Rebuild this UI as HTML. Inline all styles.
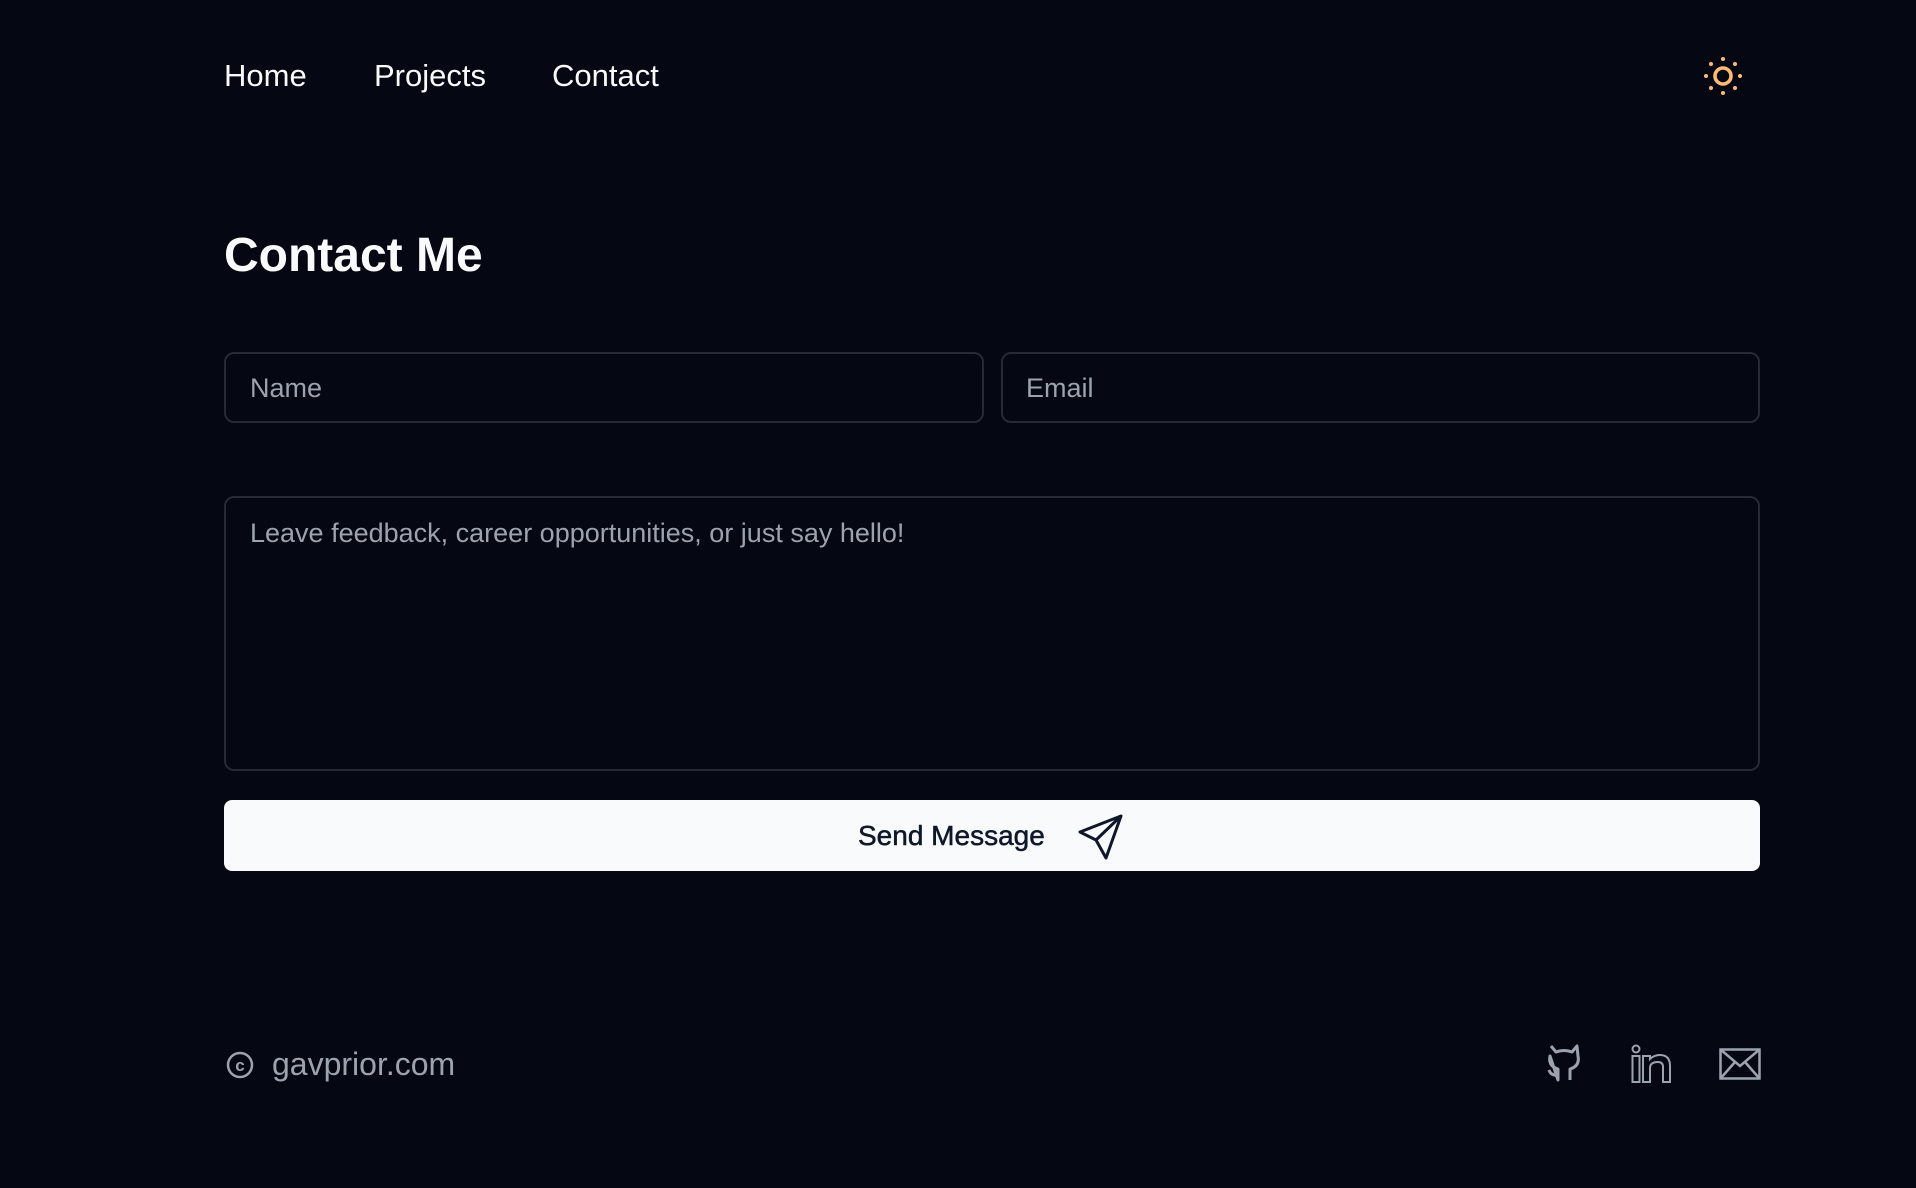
<!DOCTYPE html>
<html><head><meta charset="utf-8"><style>
*{margin:0;padding:0;box-sizing:border-box}
html,body{width:1916px;height:1188px;background:#050712;overflow:hidden;font-family:"Liberation Sans",sans-serif}
.a{position:absolute;white-space:nowrap}
.nav{color:#f8fafc;font-size:31px;top:58px}
.box{position:absolute;border:2px solid #252a36;border-radius:10px;background:#050712}
.ph{position:absolute;color:#9ca3af;font-size:27px}
</style></head><body>
<div class="a nav" style="left:224px">Home</div>
<div class="a nav" style="left:374px">Projects</div>
<div class="a nav" style="left:552px">Contact</div>
<svg class="a" style="left:1700px;top:53px" width="46" height="46" viewBox="0 0 46 46">
<circle cx="23" cy="23" r="8" fill="none" stroke="#fdba74" stroke-width="3.6"/>
<g fill="#fdba74"><circle cx="23" cy="6" r="2"/><circle cx="23" cy="40" r="2"/><circle cx="6" cy="23" r="2"/><circle cx="40" cy="23" r="2"/><circle cx="11" cy="11" r="2"/><circle cx="35" cy="11" r="2"/><circle cx="11" cy="35" r="2"/><circle cx="35" cy="35" r="2"/></g></svg>
<div class="a" style="left:224px;top:228px;font-size:48px;font-weight:bold;color:#f8fafc">Contact Me</div>
<div class="box" style="left:224px;top:352px;width:760px;height:71px"></div>
<div class="ph" style="left:250px;top:373px">Name</div>
<div class="box" style="left:1001px;top:352px;width:759px;height:71px"></div>
<div class="ph" style="left:1026px;top:373px">Email</div>
<div class="box" style="left:224px;top:496px;width:1536px;height:275px"></div>
<div class="ph" style="left:250px;top:518px">Leave feedback, career opportunities, or just say hello!</div>
<div class="a" style="left:224px;top:800px;width:1536px;height:71px;background:#f8fafc;border-radius:8px"></div>
<div class="a" style="left:858px;top:820px;font-size:28px;color:#0f172a;-webkit-text-stroke:0.5px #0f172a">Send Message</div>
<svg class="a" style="left:1076px;top:812px" width="50" height="50" viewBox="0 0 50 50"><path d="M45 4 L4 20 L20 28 L30 46 Z M45 4 L20 28" fill="none" stroke="#0f172a" stroke-width="3" stroke-linejoin="round"/></svg>
<svg class="a" style="left:225px;top:1050px" width="30" height="30" viewBox="0 0 30 30"><circle cx="15" cy="15" r="12" fill="none" stroke="#9ca3af" stroke-width="2.5"/><text x="15" y="21" font-size="17" font-weight="bold" text-anchor="middle" fill="#9ca3af" font-family="Liberation Sans">c</text></svg>
<div class="a" style="left:272px;top:1046px;font-size:32px;color:#9ca3af">gavprior.com</div>
<svg class="a" style="left:1544px;top:1042px" width="40" height="42" viewBox="0 0 40 42" fill="none" stroke="#9ca3af" stroke-width="3" stroke-linejoin="round"><path d="M7 4 L12 10 Q20 7 28 10 L33 4 L34 14 Q36 24 26 27 L26 38 M14 38 L14 27 Q4 24 6 14 Z M14 33 Q7 34 5 28"/></svg>
<svg class="a" style="left:1631px;top:1044px" width="42" height="40" viewBox="0 0 42 40" fill="none" stroke="#9ca3af" stroke-width="2"><circle cx="5" cy="5" r="3.5"/><rect x="1.5" y="12" width="7" height="26"/><path d="M12 12 H19 V15 Q23 11 29 11 Q39 11 39 22 V38 H32 V23 Q32 18 27 18 Q19 18 19 24 V38 H12 Z"/></svg>
<svg class="a" style="left:1719px;top:1048px" width="42" height="32" viewBox="0 0 42 32" fill="none" stroke="#9ca3af" stroke-width="2.5"><rect x="1.5" y="1.5" width="39" height="29"/><path d="M1.5 1.5 L21 18 L40.5 1.5 M1.5 30.5 L16 14 M40.5 30.5 L26 14"/></svg>
</body></html>
